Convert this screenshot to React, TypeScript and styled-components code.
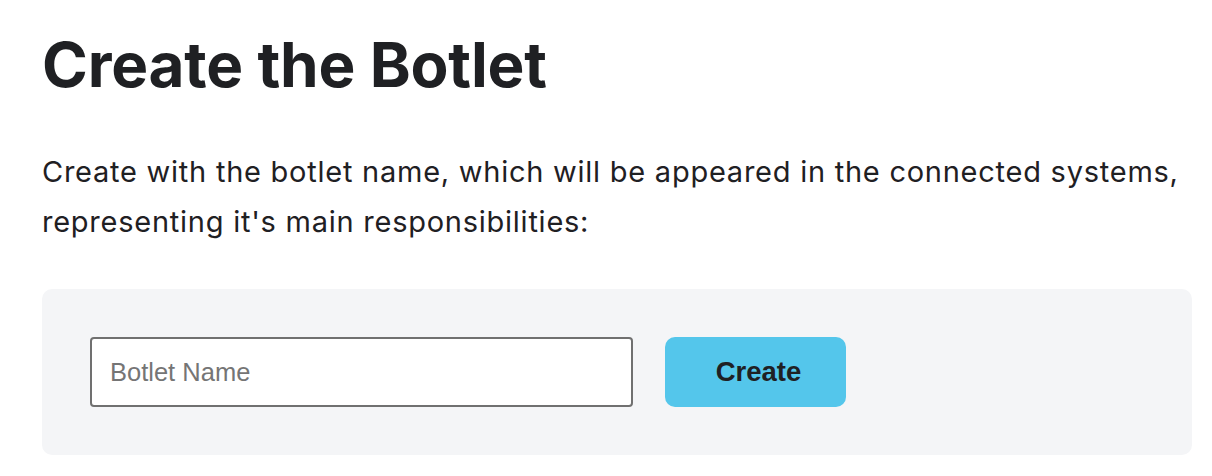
import React from "react";
import styled, { createGlobalStyle } from "styled-components";

const Global = createGlobalStyle`
  html, body { margin: 0; padding: 0; background: #ffffff; }
  body { font-family: Inter, "Noto Sans", sans-serif; color: #1f2023; }
  * { box-sizing: border-box; }
`;

const Page = styled.main`
  padding: 22px 20px 0 42px;
`;

const Title = styled.h1`
  margin: 0;
  font-family: Inter, sans-serif;
  font-weight: 700;
  font-size: 62px;
  line-height: 86px;
  letter-spacing: -0.2px;
  color: #1f2023;
`;

const Lead = styled.p`
  margin: 39px 0 0;
  font-family: Inter, sans-serif;
  font-size: 29px;
  line-height: 50px;
  letter-spacing: 0.75px;
  font-weight: 400;
  color: #1f2023;
  white-space: nowrap;
`;

const Panel = styled.section`
  margin-top: 42px;
  background: #f4f5f7;
  border-radius: 10px;
  padding: 48px;
  display: flex;
  align-items: center;
  gap: 32px;
`;

const NameInput = styled.input`
  width: 543px;
  height: 70px;
  border: 2px solid #707070;
  border-radius: 4px;
  padding: 0 18px;
  font-family: "Liberation Sans", Arial, sans-serif;
  font-size: 25.5px;
  color: #1f2023;
  background: #fff;
  outline: none;
  &::placeholder { color: #757575; }
`;

const CreateButton = styled.button`
  width: 181px;
  height: 70px;
  border: none;
  border-radius: 10px;
  background: #54c6eb;
  font-family: "Liberation Sans", Arial, sans-serif;
  font-weight: 700;
  font-size: 27.5px;
  color: #1f2023;
  padding: 0 0 0 6px;
  cursor: pointer;
`;

export default function App() {
  return (
    <>
      <Global />
      <Page>
        <Title>Create the Botlet</Title>
        <Lead>
          Create with the botlet name, which will be appeared in the connected systems,
          <br />
          representing it's main responsibilities:
        </Lead>
        <Panel>
          <NameInput placeholder="Botlet Name" />
          <CreateButton>Create</CreateButton>
        </Panel>
      </Page>
    </>
  );
}
